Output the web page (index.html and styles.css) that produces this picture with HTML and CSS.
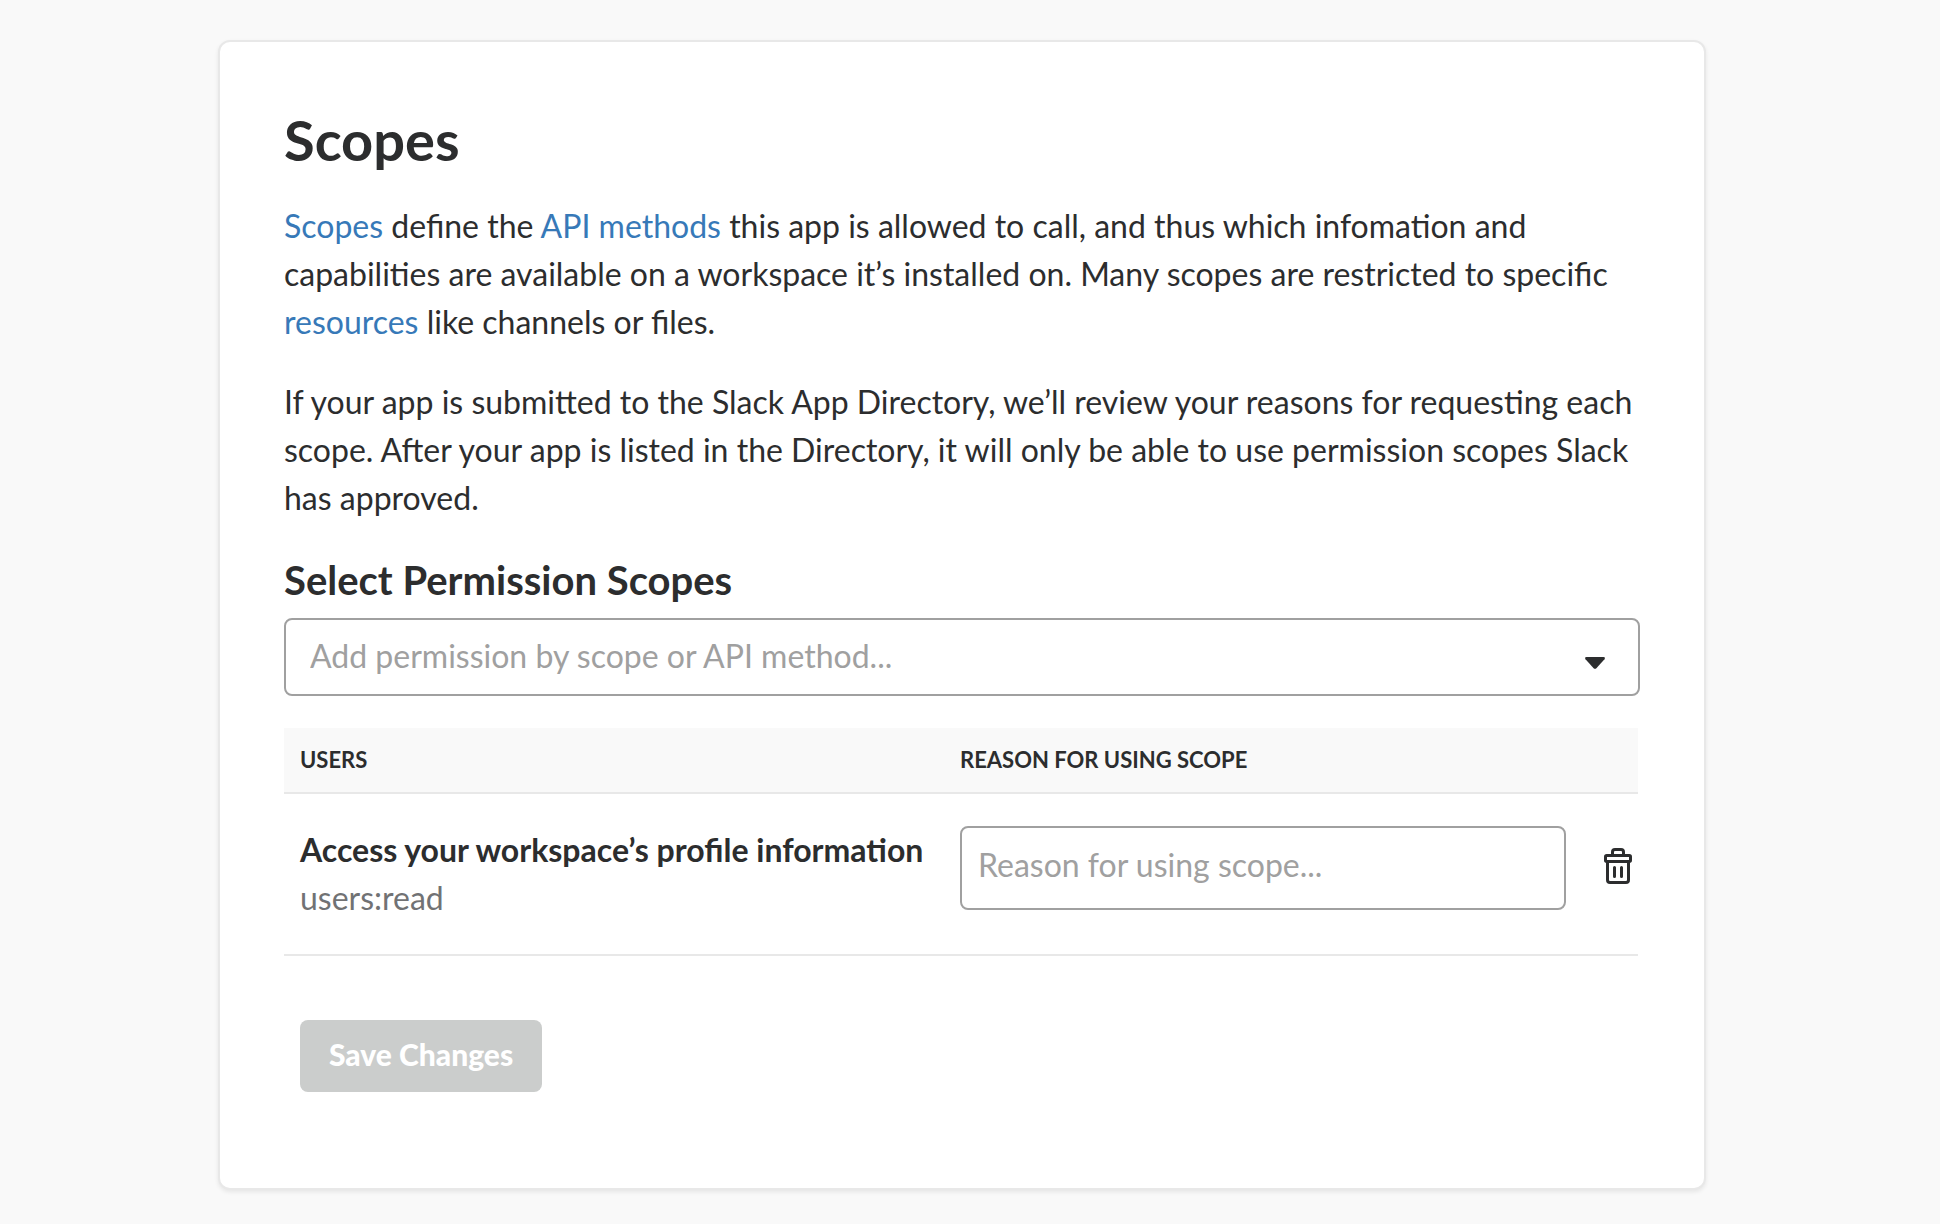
FILE: index.html
```html
<!DOCTYPE html>
<html lang="en">
<head>
<meta charset="utf-8">
<meta name="viewport" content="width=device-width, initial-scale=1">
<title>Scopes</title>
<link rel="stylesheet" href="styles.css">
</head>
<body>
<main class="card">
  <h1 class="title">Scopes</h1>
  <p class="text"><a href="#scopes">Scopes</a> define the <a href="#methods">API methods</a> this app is allowed to call, and thus which infomation and capabilities are available on a workspace it’s installed on. Many scopes are restricted to specific <a href="#resources">resources</a> like channels or files.</p>
  <p class="text">If your app is submitted to the Slack App Directory, we’ll review your reasons for requesting each scope. After your app is listed in the Directory, it will only be able to use permission scopes Slack has approved.</p>
  <form class="form">
    <label class="subtitle" for="scope-select">Select Permission Scopes</label>
    <div class="picker">
      <select class="picker-select" id="scope-select">
        <option>Add permission by scope or API method...</option>
      </select>
      <svg class="picker-arrow" viewBox="0 0 20 12" aria-hidden="true"><path d="M1.500 0h17q2.200.300 1 2.300L11.600 11q-1.600 1.700-3.200 0L.500 2.300Q-.700.300 1.500 0z"/></svg>
    </div>
    <div class="scopes-wrap">
      <table class="scopes">
        <thead>
          <tr><th class="col-scope" scope="col">USERS</th><th class="col-reason" scope="col" colspan="2">REASON FOR USING SCOPE</th></tr>
        </thead>
        <tbody>
          <tr>
            <td class="scope"><label class="scope-name" for="reason">Access your workspace’s profile information</label><span class="scope-id">users:read</span></td>
            <td class="reason"><input class="reason-input" id="reason" type="text" placeholder="Reason for using scope..."></td>
            <td class="remove"><button class="remove-button" type="button" aria-label="Remove scope"><svg class="trash" viewBox="0 0 28 36" aria-hidden="true"><rect x="1.500" y="7.500" width="25" height="6" rx="1.200"/><path d="M8.500 7V4q0-2.500 2.500-2.500h6q2.500 0 2.500 2.500v3M3.500 14v18q0 2.500 2.500 2.500h16q2.500 0 2.500-2.500V14M10.500 19.500v9M17.500 19.500v9"/></svg></button></td>
          </tr>
        </tbody>
      </table>
    </div>
    <button class="save" type="submit" disabled>Save Changes</button>
  </form>
</main>
</body>
</html>
```
FILE: styles.css
```css
* { box-sizing: border-box; }
body {
  margin: 0;
  padding: 40px 234px 34px 218px;
  background: #f9f9f9;
  color: #2c2d2e;
  font: 32px/48px Lato, sans-serif;
}
.card {
  padding: 64px 64px 96px;
  border: 2px solid #e8e8e8;
  border-radius: 12px;
  background: #fff;
  box-shadow: 0 2px 4px rgba(0, 0, 0, .08);
}
.title { margin: 0 0 28px; font-size: 56px; line-height: 68px; font-weight: 700; }
.text { margin: 0 0 32px; }
a { color: #3779b8; text-decoration: none; }
.subtitle { display: block; margin-bottom: 12px; font-size: 40px; line-height: 52px; font-weight: 700; }
.picker { position: relative; }
.picker-select {
  display: block;
  width: 100%;
  height: 78px;
  padding: 0 24px 2px;
  border: 2px solid #a0a0a0;
  border-radius: 8px;
  background: #fff;
  color: #a0a0a0;
  font: inherit;
  appearance: none;
}
.picker-arrow { position: absolute; top: 39px; right: 35px; width: 20px; height: 12px; fill: #2c2d2e; pointer-events: none; }
.scopes-wrap { margin-top: 32px; padding-right: 2px; }
.scopes { width: 100%; border-collapse: separate; border-spacing: 0; }
th { height: 66px; padding: 0; border-bottom: 2px solid #e8e8e8; background: #f9f9f9; font-size: 22px; text-align: left; }
td { height: 162px; padding: 0; border-bottom: 2px solid #e8e8e8; }
.scopes .col-scope { width: 676px; padding-left: 16px; }
.scopes .scope { padding-left: 16px; }
.scope-name, .scope-id { display: block; white-space: nowrap; }
.scope-name { font-weight: 700; }
.scope-id { color: #717274; }
.scopes .reason { padding-bottom: 12px; }
.reason-input {
  display: block;
  width: 100%;
  height: 84px;
  padding: 0 16px 8px;
  border: 2px solid #a0a0a0;
  border-radius: 8px;
  font: inherit;
}
.reason-input::placeholder { color: #a0a0a0; opacity: 1; }
.remove { width: 72px; }
.remove-button { display: block; margin-left: auto; padding: 0 6px 16px; border: 0; background: none; }
.trash { display: block; width: 28px; height: 36px; fill: none; stroke: #2c2d2e; stroke-width: 3; stroke-linecap: round; stroke-linejoin: round; }
.save {
  display: block;
  height: 72px;
  margin: 64px 0 0 16px;
  padding: 0 29px 4px;
  border: 0;
  border-radius: 8px;
  background: #cbcdcc;
  color: #fff;
  font: 900 30px/48px Lato, sans-serif;
}
```
